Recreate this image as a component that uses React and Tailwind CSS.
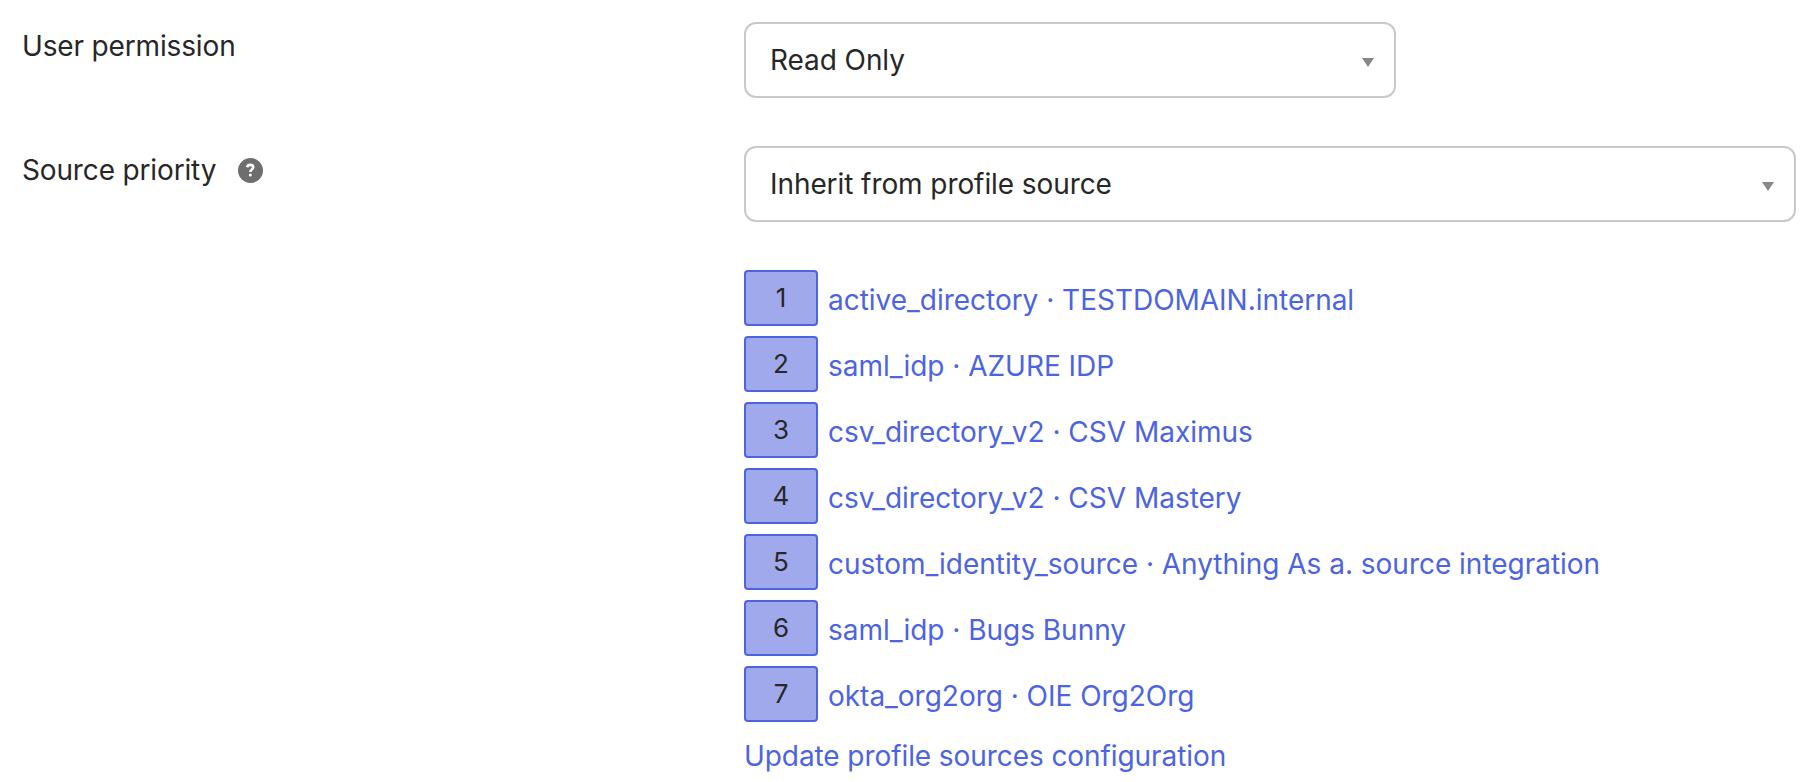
import React, { useState } from "react";

const sources = [
    "active_directory · TESTDOMAIN.internal",
    "saml_idp · AZURE IDP",
    "csv_directory_v2 · CSV Maximus",
    "csv_directory_v2 · CSV Mastery",
    "custom_identity_source · Anything As a. source integration",
    "saml_idp · Bugs Bunny",
    "okta_org2org · OIE Org2Org",
];

function SelectBox({ value, onClick, className }) {
    return (
        <button type="button" onClick={onClick} className={`flex h-[76px] items-center justify-between rounded-xl border-2 border-[#c9c9c9] bg-white pr-5 pl-6 text-left ${className}`}>
            <span>{value}</span>
            <svg width="12" height="9" viewBox="0 0 12 9" className="mt-1 fill-[#888888]">
                <path d="M0 0h12L6 9z" />
            </svg>
        </button>
    );
}

function HelpIcon() {
    return (
        <span className="flex h-[25px] w-[25px] items-center justify-center rounded-full bg-[#6e6e6e]">
            <svg width="25" height="25" viewBox="0 0 25 25" fill="none">
                <path d="M9.2 9.2C9.5 7.7 10.6 6.9 12.2 6.9c1.8 0 3 .9 3 2.4 0 2.3-2.9 2.1-2.9 4.8" stroke="white" strokeWidth="2.6" />
                <circle cx="12.3" cy="17" r="1.5" fill="white" />
            </svg>
        </span>
    );
}

export default function App() {
    const [permission] = useState("Read Only");
    const [priority] = useState("Inherit from profile source");

    return (
        <div className="flex min-h-screen flex-col gap-12 bg-white pt-[22px] pr-[18px] pl-[22px] font-['Inter',sans-serif] text-[28px] leading-10 tracking-[-0.08px] text-[#272727]">
            <div className="flex">
                <div className="w-[722px] pt-1 tracking-[-0.15px]">User permission</div>
                <SelectBox value={permission} className="w-[652px]" />
            </div>
            <div className="flex">
                <div className="flex h-11 w-[722px] items-center gap-[22px] pt-1 tracking-[-0.15px]">
                    <span>Source priority</span>
                    <HelpIcon />
                </div>
                <div className="flex-1">
                    <SelectBox value={priority} className="w-full" />
                    <ol className="mt-12 flex flex-col gap-2.5 tracking-[-0.02px]">
                        {sources.map((source, i) => (
                            <li key={i} className="flex h-14 items-center gap-2.5">
                                <span className="flex h-14 w-[74px] items-center justify-center rounded border-2 border-[#4c64e1] bg-[#a1a9ed] text-[26px]">{i + 1}</span>
                                <a href="#" className="pt-1 text-[#4c64e1]">{source}</a>
                            </li>
                        ))}
                    </ol>
                    <a href="#" className="mt-3.5 block text-[#4c64e1]">Update profile sources configuration</a>
                </div>
            </div>
        </div>
    );
}
